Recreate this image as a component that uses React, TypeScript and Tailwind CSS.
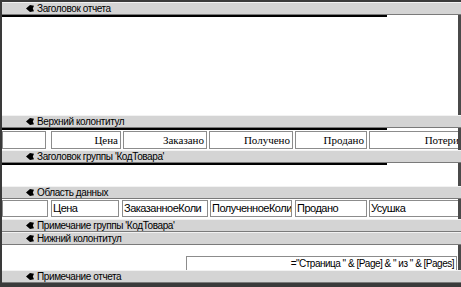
import React from 'react';

// Arrow mark used by every section bar of the report designer
function SectionArrow() {
  return (
    <svg width="8" height="7" viewBox="0 0 8 7" className="shrink-0">
      <path d="M0 3.5 L4 0 L8 0.8 L6.8 3.5 L8 6.2 L4 7 Z" fill="#000" />
    </svg>
  );
}

function Bar({ label }: { label: string }) {
  return (
    <div className="h-[13px] bg-[#d4d4d4] border-t border-t-[#f2f2f2] border-b border-b-[#7a7a7a] flex items-center pl-[24px] text-[10px] tracking-[-0.4px] leading-none text-black">
      <SectionArrow />
      <span className="ml-[3px] whitespace-nowrap">{label}</span>
    </div>
  );
}

function Area({ height, marker = false, children }: { height: string; marker?: boolean; children?: React.ReactNode }) {
  return (
    <div className={`${height} bg-white border-r-[3px] border-r-[#4a4a4a] flex flex-col overflow-hidden`}>
      {marker && <div className="w-[385px] h-[2px] bg-black shrink-0" />}
      {children}
    </div>
  );
}

const headerCells = [
  { w: 'w-[44px]', text: '' },
  { w: 'w-[70px]', text: 'Цена' },
  { w: 'w-[84px]', text: 'Заказано' },
  { w: 'w-[84px]', text: 'Получено' },
  { w: 'w-[72px]', text: 'Продано' },
  { w: 'w-[93px]', text: 'Потери' },
];

// the two long field names are clipped by their boxes, as in the designer
const dataCells = [
  { w: 'w-[46px]', text: '' },
  { w: 'w-[68px]', text: 'Цена' },
  { w: 'w-[86px]', text: 'ЗаказанноеКоли' },
  { w: 'w-[82px]', text: 'ПолученноеКоли' },
  { w: 'w-[72px]', text: 'Продано' },
  { w: 'w-[93px]', text: 'Усушка' },
];

export default function App() {
  return (
    <div className="w-[461px] h-[287px] bg-[#3a3a3a] pt-[2px] pl-[2px] overflow-hidden font-['Liberation_Sans',Arial,sans-serif]">
      <Bar label="Заголовок отчета" />
      <Area height="h-[100px]" marker />

      <Bar label="Верхний колонтитул" />
      <Area height="h-[22px]" marker>
        <div className="flex mt-[1px] h-[18px]">
          {headerCells.map((c, i) => (
            <div
              key={i}
              className={`${c.w} ${i === 1 ? 'ml-[5px]' : i > 1 ? 'ml-[2px]' : ''} shrink-0 border border-[#8c8c8c] flex items-center justify-end pr-[2px] font-['Liberation_Serif','Times_New_Roman',serif] text-[11px] text-black whitespace-nowrap overflow-hidden`}
            >
              {c.text}
            </div>
          ))}
        </div>
      </Area>

      <Bar label="Заголовок группы 'КодТовара'" />
      <Area height="h-[23px]" marker />

      <Bar label="Область данных" />
      <Area height="h-[20px]">
        <div className="flex mt-[1px] h-[17px]">
          {dataCells.map((c, i) => (
            <div
              key={i}
              className={`${c.w} ${i === 0 ? '' : i === 3 || i === 5 ? 'ml-[2px]' : 'ml-[3px]'} shrink-0 border border-[#8c8c8c] flex items-center pl-[1px] text-[11px] tracking-[-0.5px] text-black whitespace-nowrap overflow-hidden`}
            >
              {c.text}
            </div>
          ))}
        </div>
      </Area>

      <Bar label="Примечание группы 'КодТовара'" />
      <Bar label="Нижний колонтитул" />
      <Area height="h-[25px]">
        <div className="ml-[184px] mt-[11px] w-[271px] h-[14px] border border-[#8c8c8c] border-b-0 flex items-center justify-end pr-[2px] text-[10px] tracking-[-0.5px] text-black whitespace-nowrap overflow-hidden">
          ="Страница " &amp; [Page] &amp; " из " &amp; [Pages]
        </div>
      </Area>

      <Bar label="Примечание отчета" />
    </div>
  );
}
